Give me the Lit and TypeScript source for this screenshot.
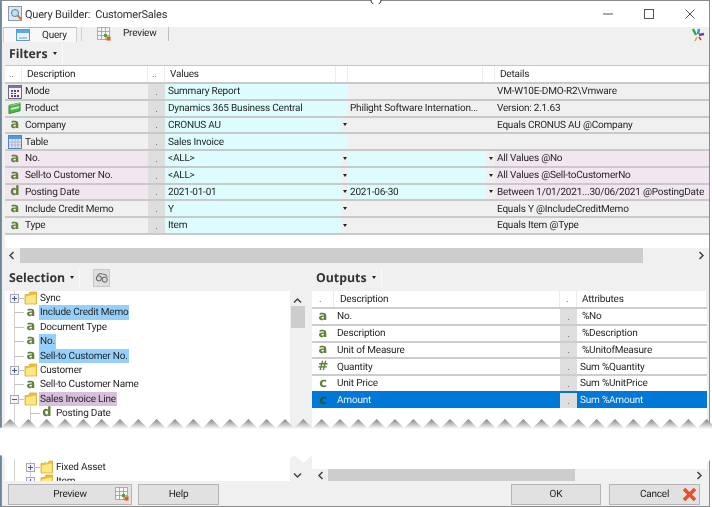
import { LitElement, css, html, svg, nothing } from 'lit';
import { classMap } from 'lit/directives/class-map.js';

type Glyph = 'a' | 'd' | 'c' | '#' | 'mode' | 'product' | 'table' | 'folder';

interface FilterRow {
  icon: Glyph;
  desc: string;
  v1: string;
  v2?: string;
  details: string;
  arrows: number;
  marked?: boolean;
}

interface OutputRow {
  icon: Glyph;
  desc: string;
  attr: string;
  sum?: boolean;
  selected?: boolean;
}

interface TreeRow {
  icon: Glyph;
  label: string;
  level: number;
  box?: '+' | '-';
  mark?: 'blue' | 'purple';
}

const FILTERS: FilterRow[] = [
  { icon: 'mode', desc: 'Mode', v1: 'Summary Report', details: 'VM-W10E-DMO-R2\\Vmware', arrows: 0 },
  { icon: 'product', desc: 'Product', v1: 'Dynamics 365 Business Central', v2: 'Philight Software Internation...', details: 'Version: 2.1.63', arrows: 0 },
  { icon: 'a', desc: 'Company', v1: 'CRONUS AU', details: 'Equals CRONUS AU @Company', arrows: 1 },
  { icon: 'table', desc: 'Table', v1: 'Sales Invoice', details: '', arrows: 0 },
  { icon: 'a', desc: 'No.', v1: '<ALL>', details: 'All Values @No', arrows: 2, marked: true },
  { icon: 'a', desc: 'Sell-to Customer No.', v1: '<ALL>', details: 'All Values @Sell-toCustomerNo', arrows: 2, marked: true },
  { icon: 'd', desc: 'Posting Date', v1: '2021-01-01', v2: '2021-06-30', details: 'Between 1/01/2021...30/06/2021 @PostingDate', arrows: 2, marked: true },
  { icon: 'a', desc: 'Include Credit Memo', v1: 'Y', details: 'Equals Y @IncludeCreditMemo', arrows: 1 },
  { icon: 'a', desc: 'Type', v1: 'Item', details: 'Equals Item @Type', arrows: 1 }
];

const OUTPUTS: OutputRow[] = [
  { icon: 'a', desc: 'No.', attr: '%No' },
  { icon: 'a', desc: 'Description', attr: '%Description' },
  { icon: 'a', desc: 'Unit of Measure', attr: '%UnitofMeasure' },
  { icon: '#', desc: 'Quantity', attr: 'Sum %Quantity', sum: true },
  { icon: 'c', desc: 'Unit Price', attr: 'Sum %UnitPrice', sum: true },
  { icon: 'c', desc: 'Amount', attr: 'Sum %Amount', sum: true, selected: true }
];

const TREE_TOP: TreeRow[] = [
  { icon: 'folder', label: 'Sync', level: 0, box: '+' },
  { icon: 'a', label: 'Include Credit Memo', level: 0, mark: 'blue' },
  { icon: 'a', label: 'Document Type', level: 0 },
  { icon: 'a', label: 'No.', level: 0, mark: 'blue' },
  { icon: 'a', label: 'Sell-to Customer No.', level: 0, mark: 'blue' },
  { icon: 'folder', label: 'Customer', level: 0, box: '+' },
  { icon: 'a', label: 'Sell-to Customer Name', level: 0 },
  { icon: 'folder', label: 'Sales Invoice Line', level: 0, box: '-', mark: 'purple' },
  { icon: 'd', label: 'Posting Date', level: 1 }
];

const TREE_BOTTOM: TreeRow[] = [
  { icon: 'folder', label: 'Fixed Asset', level: 1, box: '+' },
  { icon: 'folder', label: 'Item', level: 1, box: '+' }
];

function glyph(kind: Glyph) {
  switch (kind) {
    case 'mode':
      return html`<svg width="14" height="14" viewBox="0 0 14 14">
        <rect x=".5" y=".5" width="13" height="13" fill="#f4f4f8" stroke="#6a6a8a" />
        <path d="M1 1h12v2H1z" fill="#7a7a9a" />
        <path d="M3 5h2v2H3zM9 5h2v2H9zM3 10h2v2H3z" fill="#a03a4a" />
        <path d="M6 5h2v2H6zM6 10h2v2H6zM9 10h2v2H9zM3 8h2v1H3zM6 8h2v1H6z" fill="#3a4aa0" />
      </svg>`;
    case 'product':
      return html`<svg width="15" height="13" viewBox="0 0 15 13">
        <path d="M1 3l12-2.500V9L1 12z" fill="#4fb548" stroke="#2f7a2c" stroke-width=".8" />
        <path d="M1 3h3l10-2.500" fill="none" stroke="#9adf8c" />
        <path d="M3 6l9-2v2L3 8z" fill="#c9efc0" />
      </svg>`;
    case 'table':
      return html`<svg width="14" height="14" viewBox="0 0 14 14">
        <rect x=".5" y=".5" width="13" height="13" fill="#dfe3f0" stroke="#4f86c0" />
        <rect x="1" y="1" width="12" height="3" fill="#4f9be0" />
        <path d="M1 7h12M1 10h12M4 4v9M7 4v9M10 4v9" stroke="#a8aec4" stroke-width=".8" />
      </svg>`;
    case 'folder':
      return html`<svg width="14" height="14" viewBox="0 0 14 14">
        <path d="M1 3.500h3.500L6 1h6.500V13H1z" fill="#eebf35" stroke="#d9ad34" stroke-width=".8" />
        <path d="M1.800 5.500l10-2V12.500h-10z" fill="#fce884" />
      </svg>`;
    default:
      return html`<span class="letter">${kind}</span>`;
  }
}

function previewIcon() {
  return html`<svg width="14" height="14" viewBox="0 0 14 14">
    <path d="M.5 .5h12v12H.5zM.5 4.500h12M.5 8.500h12M4.500 .5v12M8.500 .5v12" fill="#f4f4f4" stroke="#9a9a9a" stroke-width=".8" />
    <rect x="7" y="7" width="3" height="3" fill="#4aa83a" />
    <rect x="9.500" y="9.500" width="4" height="4" fill="#e8562a" />
  </svg>`;
}

class AppRoot extends LitElement {
  public static override styles = css`
    :host {
      display: block;
      position: relative;
      width: 712px;
      height: 507px;
      overflow: hidden;
      background: linear-gradient(to right, #6f8796 1px, #fff 1px);
      font-family: Roboto, 'Liberation Sans', Arial, sans-serif;
      font-size: 10px;
      letter-spacing: -0.2px;
      text-rendering: geometricPrecision;
      color: #262626;
    }

    .window {
      display: flex;
      flex-direction: column;
      box-sizing: border-box;
      width: 709px;
      height: 507px;
      margin-left: 1px;
      background: #f0f0f0;
      border: 1px solid #8c8c8c;
      filter: blur(0.3px);
    }

    .title {
      display: flex;
      align-items: center;
      flex: none;
      height: 26px;
      background: #fff;
      padding-left: 6px;
      font-size: 11px;
      color: #333;
    }

    .title .name {
      margin-left: 1px;
      white-space: pre;
    }

    .controls {
      display: flex;
      align-items: center;
      margin-left: auto;
      gap: 31px;
      padding-right: 14px;
    }

    .tabs {
      display: flex;
      flex: none;
      height: 15px;
      position: relative;
    }

    .tab {
      display: flex;
      align-items: center;
      box-sizing: border-box;
      height: 15px;
      white-space: nowrap;
    }

    .tab.query {
      width: 74px;
      margin-left: 1px;
      padding-left: 12px;
      background: #f8f8f8;
      border-top: 1px solid #a8b8c8;
      border-right: 1px solid #cfcfcf;
      border-left: 1px solid #cfcfcf;
    }

    .tab.query span {
      margin-left: 12px;
    }

    .tab.preview {
      width: 88px;
      margin-left: 4px;
      padding-left: 15px;
      border-left: 1px solid #cfcfcf;
      border-right: 1px solid #bdbdbd;
      height: 14px;
    }

    .tab.preview span {
      margin-left: 12px;
      margin-top: -1px;
    }

    .logo {
      position: absolute;
      right: 3px;
      top: 1px;
    }

    .head {
      display: flex;
      align-items: center;
      font-family: 'Open Sans', sans-serif;
      font-weight: 700;
      font-size: 12.3px;
      letter-spacing: 0;
      color: #333;
      white-space: nowrap;
    }

    .head .caret {
      margin-left: 5px;
    }

    .head .sep {
      width: 1px;
      height: 18px;
      margin-left: 5px;
      background: #fafafa;
    }

    .head.filters {
      flex: none;
      height: 23px;
      padding-left: 7px;
      box-sizing: border-box;
    }

    .caret {
      display: inline-block;
      width: 0;
      height: 0;
      border-top: 3px solid #222;
      border-left: 2px solid transparent;
      border-right: 2px solid transparent;
    }

    .filter-table {
      flex: none;
      margin-left: 3px;
      border-top: 1px solid #c6c6c6;
      border-bottom: 2px solid #c9c9c9;
    }

    .f-row {
      display: grid;
      grid-template-columns: 143px 17px 176px 7px 138px 9px 214px;
      height: 16.75px;
      box-sizing: border-box;
      border-top: 2px solid #c9c9c9;
      white-space: nowrap;
    }

    .f-row.header {
      height: 16px;
      background: #fff;
      border-top: 0;
      grid-template-columns: 17px 126px 17px 171px 12px 135px 12px 214px;
    }

    .f-row.header > div {
      border-right: 1px solid #ececec;
      line-height: 17px;
      padding-left: 5px;
      overflow: hidden;
    }

    .dots {
      color: #666;
    }

    .cell {
      display: flex;
      align-items: center;
      box-sizing: border-box;
      padding-top: 1px;
      overflow: hidden;
      min-width: 0;
    }

    .cell.desc {
      padding-left: 3px;
    }

    .icon {
      display: flex;
      align-items: center;
      justify-content: center;
      flex: none;
      width: 14px;
      margin-right: 3px;
    }

    .letter {
      font-family: 'DejaVu Sans', sans-serif;
      font-weight: 700;
      font-size: 13px;
      line-height: 12px;
      letter-spacing: 0;
      color: #61803b;
    }

    .btn-cell {
      display: flex;
      align-items: flex-end;
      justify-content: center;
      background: #dedede;
      font-size: 9px;
      line-height: 12px;
      color: #555;
    }

    .cyan {
      background: #ddfcfd;
    }

    .marked {
      background: #f2e6f0;
    }

    .val {
      padding-left: 3px;
    }

    .val.second {
      padding-left: 2px;
    }

    .arrow {
      display: flex;
      align-items: center;
      justify-content: center;
    }

    .wide {
      grid-column: span 2;
    }

    .blank {
      flex: none;
      height: 13.25px;
      margin-left: 3px;
      background: #fff;
    }

    .hscroll {
      display: flex;
      align-items: center;
      flex: none;
      box-sizing: border-box;
    }

    .hscroll.top {
      height: 15px;
    }

    .hscroll .thumb {
      height: 100%;
      background: #cdcdcd;
    }

    .hscroll .end {
      display: flex;
      align-items: center;
      justify-content: center;
      flex: none;
    }

    .split {
      display: flex;
      flex: none;
      height: 218px;
    }

    .left {
      display: flex;
      flex-direction: column;
      flex: none;
      width: 310px;
    }

    .right {
      display: flex;
      flex-direction: column;
      flex: 1;
      min-width: 0;
      padding-right: 2px;
    }

    .head.panel {
      flex: none;
      height: 28px;
      box-sizing: border-box;
      padding-top: 1px;
    }

    .left .head.panel {
      padding-left: 7px;
    }

    .right .head.panel {
      padding-left: 4px;
    }

    .find {
      display: flex;
      align-items: center;
      justify-content: center;
      box-sizing: border-box;
      width: 17px;
      height: 18px;
      margin-left: 13px;
      background: #dfdfdf;
      border: 1px solid #c8c8c8;
    }

    .tree-wrap {
      display: flex;
      height: 190px;
      flex: none;
    }

    .tree {
      width: 285px;
      margin-left: 3px;
      box-sizing: border-box;
      padding-left: 3px;
      background: #fff;
      overflow: hidden;
    }

    .t-row {
      display: flex;
      align-items: center;
      height: 14.4px;
      white-space: nowrap;
    }

    .tree-gap {
      height: 10.4px;
    }

    .gutter {
      position: relative;
      flex: none;
      width: 16px;
      height: 100%;
    }

    .gutter::before {
      content: '';
      position: absolute;
      left: 6px;
      top: 0;
      bottom: 0;
      width: 1px;
      background: #d0d0d0;
    }

    .gutter.stub::after {
      content: '';
      position: absolute;
      left: 6px;
      top: 7px;
      width: 10px;
      height: 1px;
      background: #c4c4c4;
    }

    .expander {
      position: absolute;
      z-index: 1;
      left: 2px;
      top: 3px;
      box-sizing: border-box;
      width: 9px;
      height: 9px;
      background: #f4f4f8;
      border: 1px solid #a8a8b8;
    }

    .expander::before,
    .expander.plus::after {
      content: '';
      position: absolute;
      background: #4a5a90;
    }

    .expander::before {
      left: 1px;
      top: 3px;
      width: 5px;
      height: 1px;
    }

    .expander.plus::after {
      left: 3px;
      top: 1px;
      width: 1px;
      height: 5px;
    }

    .t-row .icon {
      margin-right: 1px;
    }

    .t-label {
      padding: 1px 1px 0;
      line-height: 13.4px;
    }

    .t-label.blue {
      background: #95d0fc;
    }

    .t-label.purple {
      background: #d8bfdc;
    }

    .vscroll {
      position: relative;
      width: 22px;
      flex: none;
    }

    .vscroll .chev {
      position: absolute;
      left: 3px;
    }

    .vscroll .vthumb {
      position: absolute;
      left: 1px;
      top: 15px;
      width: 14px;
      height: 22px;
      background: #cdcdcd;
    }

    .out-table {
      display: flex;
      flex-direction: column;
      height: 190px;
      background: #fff;
    }

    .o-row {
      display: grid;
      grid-template-columns: 22px 226px 17px 130px;
      flex: none;
      height: 16.75px;
      box-sizing: border-box;
      border-top: 2px solid #cdcdcd;
      white-space: nowrap;
      color: #262626;
    }

    .o-row.header {
      height: 16px;
      border-top: 0;
    }

    .o-row.header > div {
      border-right: 1px solid #ececec;
      line-height: 17px;
      overflow: hidden;
    }

    .o-row.selected {
      background: #0078d7;
      color: #e8f2fb;
      border-top-color: #0078d7;
    }

    .o-row.selected .letter {
      color: #1f5d2c;
    }

    .o-row .cell.ic {
      justify-content: center;
      padding-left: 0;
    }

    .o-row .icon {
      margin: 0;
    }

    .o-desc {
      padding-left: 3px;
    }

    .o-attr {
      padding-left: 5px;
    }

    .o-attr.sum {
      padding-left: 3px;
    }

    .hscroll.bottom {
      margin-top: auto;
      height: 12px;
      background: #f0f0f0;
    }

    .footer {
      display: flex;
      flex: none;
      align-items: flex-start;
      height: 24px;
      padding: 3px 0 0 6px;
      box-sizing: border-box;
    }

    .fbtn {
      display: flex;
      align-items: center;
      justify-content: center;
      position: relative;
      box-sizing: border-box;
      height: 21px;
      background: #e1e1e1;
      border: 1px solid #b4b4b4;
      color: #222;
    }

    .fbtn svg {
      position: absolute;
      right: 2px;
      top: 2px;
    }

    .torn {
      position: absolute;
      left: 0;
      top: 418px;
      display: block;
    }

    .arc {
      position: absolute;
      left: 370px;
      top: 0;
    }
  `;

  private tornShape() {
    const top: string[] = [];
    const bottom: string[] = [];
    const step = 55 / 6;
    for (let i = 0; i < 82; i++) {
      const x = -8.33 + i * step;
      top.push(`${x.toFixed(2)},${i % 2 === 0 ? 1 : 10}`);
      bottom.unshift(`${x.toFixed(2)},${i % 2 === 0 ? 45 : 37}`);
    }
    return svg`<svg class="torn" width="712" height="48" viewBox="0 0 712 48">
      <defs>
        <linearGradient id="fade" x1="0" y1="1" x2="0" y2="11" gradientUnits="userSpaceOnUse">
          <stop offset="0" stop-color="#808080" />
          <stop offset="1" stop-color="#ffffff" />
        </linearGradient>
      </defs>
      <polygon points="${top.join(' ')} ${bottom.join(' ')}" fill="url(#fade)" />
    </svg>`;
  }

  private renderFilter(row: FilterRow) {
    const mark = classMap({ marked: !!row.marked });
    const secondCyan = row.arrows === 2;
    return html`<div class="f-row">
      <div class="cell desc ${mark}"><span class="icon">${glyph(row.icon)}</span>${row.desc}</div>
      <div class="btn-cell">.</div>
      ${row.arrows > 0
        ? html`<div class="cell val cyan">${row.v1}</div>
            <div class="arrow"><span class="caret"></span></div>`
        : html`<div class="cell val cyan wide">${row.v1}</div>`}
      <div class="cell val second ${secondCyan ? 'cyan' : ''}">${row.v2 ?? ''}</div>
      <div class="arrow">${secondCyan ? html`<span class="caret"></span>` : nothing}</div>
      <div class="cell val second ${mark}">${row.details}</div>
    </div>`;
  }

  private renderTreeRow(row: TreeRow) {
    const gutters = [];
    for (let i = 0; i <= row.level; i++) {
      const last = i === row.level;
      gutters.push(html`<div class="gutter ${last ? 'stub' : ''}">
        ${last && row.box
          ? html`<span class="expander ${row.box === '+' ? 'plus' : ''}"></span>`
          : nothing}
      </div>`);
    }
    return html`<div class="t-row">
      ${gutters}
      <span class="icon">${glyph(row.icon)}</span>
      <span class="t-label ${row.mark ?? ''}">${row.label}</span>
    </div>`;
  }

  private renderOutput(row: OutputRow) {
    return html`<div class="o-row ${row.selected ? 'selected' : ''}">
      <div class="cell ic"><span class="icon">${glyph(row.icon)}</span></div>
      <div class="cell o-desc">${row.desc}</div>
      <div class="btn-cell">.</div>
      <div class="cell o-attr ${row.sum ? 'sum' : ''}">${row.attr}</div>
    </div>`;
  }

  public override render() {
    const chevL = html`<svg width="7" height="9" viewBox="0 0 7 9"><path d="M5.500 1L2 4.500 5.500 8" fill="none" stroke="#444" stroke-width="1.500" /></svg>`;
    const chevR = html`<svg width="7" height="9" viewBox="0 0 7 9"><path d="M1.500 1L5 4.500 1.500 8" fill="none" stroke="#444" stroke-width="1.500" /></svg>`;
    return html`
      <div class="window">
        <div class="title">
          <svg width="16" height="16" viewBox="0 0 16 16">
            <rect x=".5" y=".5" width="13" height="14" fill="#dfe6f0" stroke="#8a9ab0" />
            <circle cx="7" cy="7" r="3.500" fill="#bfe0f5" stroke="#5a7f9f" />
            <path d="M9.500 9.500l4 4" stroke="#d8702a" stroke-width="2" />
          </svg>
          <span class="name">Query Builder:  CustomerSales</span>
          <div class="controls">
            <svg width="10" height="10" viewBox="0 0 10 10"><path d="M0 5h10" stroke="#555" /></svg>
            <svg width="10" height="10" viewBox="0 0 10 10"><rect x=".5" y=".5" width="9" height="9" fill="none" stroke="#555" /></svg>
            <svg width="10" height="10" viewBox="0 0 10 10"><path d="M.5 .5l9 9M9.500 .5l-9 9" stroke="#555" /></svg>
          </div>
        </div>

        <div class="tabs">
          <div class="tab query">
            <svg width="14" height="12" viewBox="0 0 14 12">
              <rect x=".5" y=".5" width="13" height="11" fill="#eaf2fa" stroke="#5a9ad8" />
              <rect x="1" y="1" width="12" height="3" fill="#5aaae8" />
              <rect x="3" y="8" width="8" height="2" fill="#b8c4d4" />
            </svg>
            <span>Query</span>
          </div>
          <div class="tab preview">${previewIcon()}<span>Preview</span></div>
          <svg class="logo" width="16" height="15" viewBox="0 0 16 15">
            <path d="M3 1l3 6" stroke="#3aa84a" stroke-width="2.500" />
            <path d="M9 1L8 6" stroke="#2a9ad0" stroke-width="2.500" />
            <path d="M9 7l5-1" stroke="#7a3a9a" stroke-width="2.500" />
            <path d="M7 9l-2 4" stroke="#e8a02a" stroke-width="1.500" />
            <path d="M9 9l2 3" stroke="#d83a3a" stroke-width="1.500" />
          </svg>
        </div>

        <div class="head filters">Filters<span class="caret"></span><span class="sep"></span></div>

        <div class="filter-table">
          <div class="f-row header">
            <div class="dots" style="padding-left:4px">..</div>
            <div>Description</div>
            <div class="dots" style="padding-left:4px">..</div>
            <div>Values</div>
            <div></div>
            <div></div>
            <div></div>
            <div>Details</div>
          </div>
          ${FILTERS.map((row) => this.renderFilter(row))}
        </div>
        <div class="blank"></div>

        <div class="hscroll top">
          <div class="end" style="width:18px">${chevL}</div>
          <div class="thumb" style="width:623px"></div>
          <div class="end" style="margin-left:auto;width:16px">${chevR}</div>
        </div>

        <div class="split">
          <div class="left">
            <div class="head panel">
              Selection<span class="caret"></span><span class="sep"></span>
              <span class="find">
                <svg width="14" height="10" viewBox="0 0 14 10">
                  <g transform="rotate(12 7 5)">
                    <circle cx="4" cy="6" r="2.500" fill="#d8d8e0" stroke="#666" />
                    <circle cx="10" cy="6" r="2.500" fill="#d8d8e0" stroke="#666" />
                    <path d="M2 3l2-2h6l2 2" fill="none" stroke="#777" />
                  </g>
                </svg>
              </span>
            </div>
            <div class="tree-wrap">
              <div class="tree">
                ${TREE_TOP.map((row) => this.renderTreeRow(row))}
                <div class="t-row"><div class="gutter"></div><div class="gutter"></div></div>
                <div class="tree-gap"></div>
                <div class="t-row"><div class="gutter"></div></div>
                ${TREE_BOTTOM.map((row) => this.renderTreeRow(row))}
              </div>
              <div class="vscroll">
                <svg class="chev" style="top:6px" width="9" height="7" viewBox="0 0 9 7"><path d="M1 5.500L4.500 2 8 5.500" fill="none" stroke="#444" stroke-width="1.500" /></svg>
                <div class="vthumb"></div>
                <svg class="chev" style="bottom:2px" width="9" height="7" viewBox="0 0 9 7"><path d="M1 1.500L4.500 5 8 1.500" fill="none" stroke="#444" stroke-width="1.500" /></svg>
              </div>
            </div>
          </div>

          <div class="right">
            <div class="head panel">Outputs<span class="caret"></span><span class="sep"></span></div>
            <div class="out-table">
              <div class="o-row header">
                <div class="dots" style="padding-left:7px">.</div>
                <div style="padding-left:6px">Description</div>
                <div class="dots" style="padding-left:6px">.</div>
                <div style="padding-left:5px">Attributes</div>
              </div>
              ${OUTPUTS.map((row) => this.renderOutput(row))}
              <div class="hscroll bottom">
                <div class="end" style="width:16px">${chevL}</div>
                <div class="thumb" style="width:247px"></div>
                <div class="end" style="margin-left:auto;width:16px">${chevR}</div>
              </div>
            </div>
          </div>
        </div>

        <div class="footer">
          <div class="fbtn" style="width:124px">Preview ${previewIcon()}</div>
          <div class="fbtn" style="width:81px;margin-left:6px">Help</div>
          <div class="fbtn" style="width:90px;margin-left:292px">OK</div>
          <div class="fbtn" style="width:91px;margin-left:8px">
            Cancel
            <svg width="15" height="15" viewBox="0 0 15 15">
              <path d="M2 2l11 11M13 2L2 13" stroke="#e8502a" stroke-width="3.500" />
            </svg>
          </div>
        </div>
      </div>
      ${this.tornShape()}
      <svg class="arc" width="12" height="4" viewBox="0 0 12 4"><path d="M1 0a5 5 0 0 0 10 0" fill="#fff" stroke="#333" /></svg>
    `;
  }
}

if (!customElements.get('app-root')) {
  customElements.define('app-root', AppRoot);
}
